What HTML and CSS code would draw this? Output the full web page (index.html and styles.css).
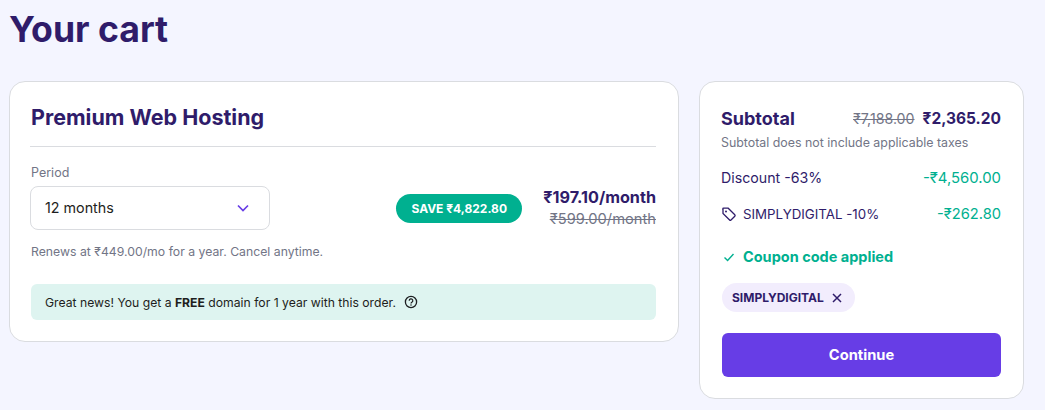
FILE: index.html
```html
<!DOCTYPE html>
<html lang="en">
<head>
<meta charset="utf-8">
<title>Your cart</title>
<link rel="stylesheet" href="styles.css">
</head>
<body>
<h1 class="title">Your cart</h1>
<div class="layout">
  <section class="card product">
    <h2 class="product-name">Premium Web Hosting</h2>
    <div class="period-row">
      <div class="period">
        <div class="period-label">Period</div>
        <div class="select">
          <span class="select-value">12 months</span>
          <svg class="chev" width="14" height="14" viewBox="0 0 14 14"><path d="M2 4.5 7 9.5 12 4.5" fill="none" stroke="#673de6" stroke-width="1.7"/></svg>
        </div>
      </div>
      <div class="pricing">
        <span class="save">SAVE ₹4,822.80</span>
        <div class="prices">
          <div class="price-now">₹197.10/month</div>
          <div class="price-old">₹599.00/month</div>
        </div>
      </div>
    </div>
    <p class="renews">Renews at ₹449.00/mo for a year. Cancel anytime.</p>
    <div class="notice">
      <span>Great news! You get a <b>FREE</b> domain for 1 year with this order.</span>
      <svg width="14" height="14" viewBox="0 0 14 14"><circle cx="7" cy="7" r="5.6" fill="none" stroke="#1d1e20" stroke-width="1.3"/><path d="M5.2 5.7a1.8 1.8 0 1 1 2.7 1.5c-.6.4-.9.7-.9 1.2" fill="none" stroke="#1d1e20" stroke-width="1.2"/><circle cx="7" cy="10.1" r=".75" fill="#1d1e20"/></svg>
    </div>
  </section>
  <aside class="card summary">
    <div class="sub-row">
      <span class="sub-label">Subtotal</span>
      <span class="sub-prices"><s class="sub-old">₹7,188.00</s><span class="sub-now">₹2,365.20</span></span>
    </div>
    <p class="sub-note">Subtotal does not include applicable taxes</p>
    <div class="line discount"><span>Discount -63%</span><span class="green">-₹4,560.00</span></div>
    <div class="line coupon">
      <span class="coupon-name">
        <svg width="16" height="16" viewBox="0 0 16 16"><path d="M1.8 2.6a.8.8 0 0 1 .8-.8h4.6l6.6 6.6a1 1 0 0 1 0 1.4l-3.8 3.8a1 1 0 0 1-1.4 0L2 7V2.6Z" transform="translate(0 .4)" fill="none" stroke="#2f1c6a" stroke-width="1.3"/><circle cx="5" cy="5.4" r="1" fill="#2f1c6a"/></svg>
        SIMPLYDIGITAL -10%
      </span>
      <span class="green small">-₹262.80</span>
    </div>
    <div class="applied">
      <svg width="14" height="14" viewBox="0 0 14 14"><path d="M2.5 7.5 5.6 10.5 11.5 4" fill="none" stroke="#00b090" stroke-width="1.4"/></svg>
      <span>Coupon code applied</span>
    </div>
    <div class="chip">
      <span>SIMPLYDIGITAL</span>
      <svg width="10" height="10" viewBox="0 0 10 10"><path d="M1 1 9 9M9 1 1 9" stroke="#2f1c6a" stroke-width="1.5"/></svg>
    </div>
    <button class="continue">Continue</button>
  </aside>
</div>
</body>
</html>
```
FILE: styles.css
```css
* { box-sizing: border-box; }
html, body { height: 100%; }
body {
  margin: 0;
  padding: 0 21px 0 9px;
  background: #f4f5ff;
  font-family: "Inter", "Noto Sans", "DejaVu Sans", sans-serif;
  color: #1d1e20;
  overflow: hidden;
}
.title {
  margin: 0;
  padding-top: 8px;
  height: 81px;
  font-size: 35.6px;
  line-height: 44px;
  font-weight: 700;
  color: #2f1c6a;
}
.layout { display: flex; align-items: flex-start; gap: 20px; }
.card {
  background: #fff;
  border: 1px solid #dadce0;
  border-radius: 16px;
}
.product { width: 670px; height: 261px; padding: 21px 22px 0 20px; }
.product-name {
  margin: 0;
  height: 44px;
  padding: 0 0 16px 1px;
  border-bottom: 1px solid #dadce0;
  font-size: 21.5px;
  line-height: 28px;
  font-weight: 700;
  color: #2f1c6a;
}
.period-row { display: flex; justify-content: space-between; align-items: flex-end; }
.period-label { margin-top: 18px; padding-left: 1px; font-size: 12.5px; line-height: 16px; color: #727586; }
.select {
  display: flex; justify-content: space-between; align-items: center;
  width: 240px; height: 44px; margin-top: 5px; padding: 0 19px 2px 14px;
  border: 1px solid #dadce0; border-radius: 8px;
  font-size: 14.3px; color: #1d1e20;
}
.chev { margin-top: 2px; }
.pricing { display: flex; align-items: center; gap: 21px; }
.save {
  display: flex; align-items: center; justify-content: center;
  width: 126px; height: 29px;
  background: #00b090; color: #fff; border-radius: 15px;
  font-size: 12px; font-weight: 700; white-space: nowrap;
}
.prices { text-align: right; }
.price-now { font-size: 16.2px; line-height: 22px; font-weight: 700; color: #2f1c6a; }
.price-old { font-size: 14.7px; line-height: 22px; color: #727586; text-decoration: line-through; }
.renews { margin: 14px 0 0 1px; font-size: 12.25px; line-height: 16px; color: #727586; }
.notice {
  display: flex; align-items: center; gap: 8px;
  height: 36px; margin: 24px 0 0 1px; padding: 0 14px;
  background: #def4f0; border-radius: 6px;
  font-size: 12.2px; color: #1d1e20;
}
.notice b { font-weight: 700; }
.summary { width: 325px; height: 318px; padding: 0 22px 0 21px; }
.sub-row { display: flex; justify-content: space-between; align-items: center; height: 24px; margin-top: 24px; }
.sub-label { font-size: 18px; font-weight: 700; color: #2f1c6a; }
.sub-prices { display: flex; align-items: center; gap: 8px; }
.sub-old { font-size: 14.2px; color: #727586; }
.sub-now { font-size: 15.5px; font-weight: 700; color: #2f1c6a; }
.sub-note { margin: 5px 0 0; font-size: 12.4px; line-height: 16px; color: #727586; }
.line { display: flex; justify-content: space-between; align-items: center; font-size: 14.2px; line-height: 20px; color: #2f1c6a; }
.discount { margin-top: 17px; }
.coupon { margin-top: 16px; }
.coupon-name { display: flex; align-items: center; gap: 6px; font-size: 13.3px; }
.green { color: #00b090; font-size: 14.9px; }
.green.small { font-size: 14.7px; }
.applied {
  display: flex; align-items: center; gap: 7px;
  margin-top: 23px; margin-left: 1px; font-size: 14.5px; line-height: 20px; font-weight: 700; color: #00b090;
}
.chip {
  display: inline-flex; align-items: center; gap: 8px;
  height: 29px; margin: 16px 0 0 1px; padding: 0 13px 0 10px;
  background: #f2edfd; border-radius: 15px;
  font-size: 12px; font-weight: 700; color: #2f1c6a;
}
.continue {
  display: block; width: 279px; height: 44px; margin: 21px 0 0 1px;
  background: #673de6; color: #fff; border: 0; border-radius: 6px;
  font-family: inherit; font-size: 14.7px; font-weight: 700;
}
```
